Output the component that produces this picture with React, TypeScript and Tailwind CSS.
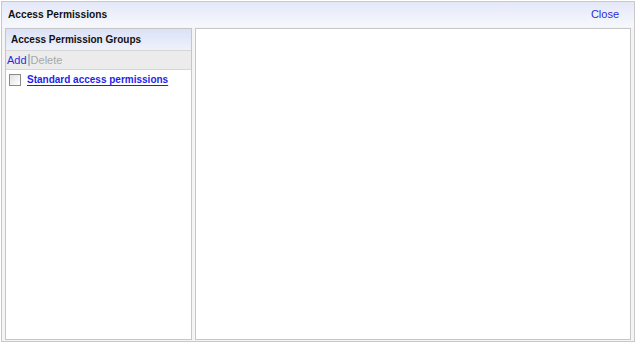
export default function App() {
  return (
    <div
      className="h-[345px] w-[637px] bg-white p-px"
      style={{ fontFamily: '"Liberation Sans", Arial, sans-serif' }}
    >
      <div className="flex h-[341px] w-[634px] flex-col border border-[#c8c8c8] bg-[#f4f4f4]">
        {/* Title bar */}
        <div className="flex h-[25px] shrink-0 items-center justify-between bg-gradient-to-b from-[#e4e8f7] to-[#f7f8fd] pl-[6px] pr-[15px]">
          <span className="text-[10.2px] font-bold text-[#111]">Access Permissions</span>
          <span className="text-[11px] text-[#2b2bd9]">Close</span>
        </div>

        <div className="flex min-h-0 flex-1 gap-[3px] px-[3px] py-px">
          {/* Left panel */}
          <div className="flex w-[187px] shrink-0 flex-col border border-[#c6c6c6] bg-white">
            <div className="flex h-[22px] items-center border-b border-[#d6d6d6] bg-gradient-to-b from-[#dbe1f6] to-[#eff2fc] pl-[5px]">
              <span className="text-[10px] font-bold text-[#111]">Access Permission Groups</span>
            </div>
            <div className="flex h-[19px] items-center border-b border-[#d6d6d6] bg-[#ececec] pl-px text-[11px]">
              <span className="text-[#2a2ae0]">Add</span>
              <span className="mx-px h-[12px] w-[2px] bg-[#b8b8b8]" />
              <span className="text-[#a8a8a8]">Delete</span>
            </div>
            <div className="flex items-center pl-[3px] pt-[2px]">
              <span className="h-[12px] w-[12px] shrink-0 border border-[#8a8a8a] bg-gradient-to-br from-[#e2e2e2] to-[#ffffff]" />
              <a className="ml-[6px] whitespace-nowrap text-[10px] font-bold text-[#1f1fe8] underline underline-offset-2">
                Standard access permissions
              </a>
            </div>
          </div>

          {/* Right panel */}
          <div className="flex-1 border border-[#c6c6c6] bg-white" />
        </div>
      </div>
    </div>
  );
}
